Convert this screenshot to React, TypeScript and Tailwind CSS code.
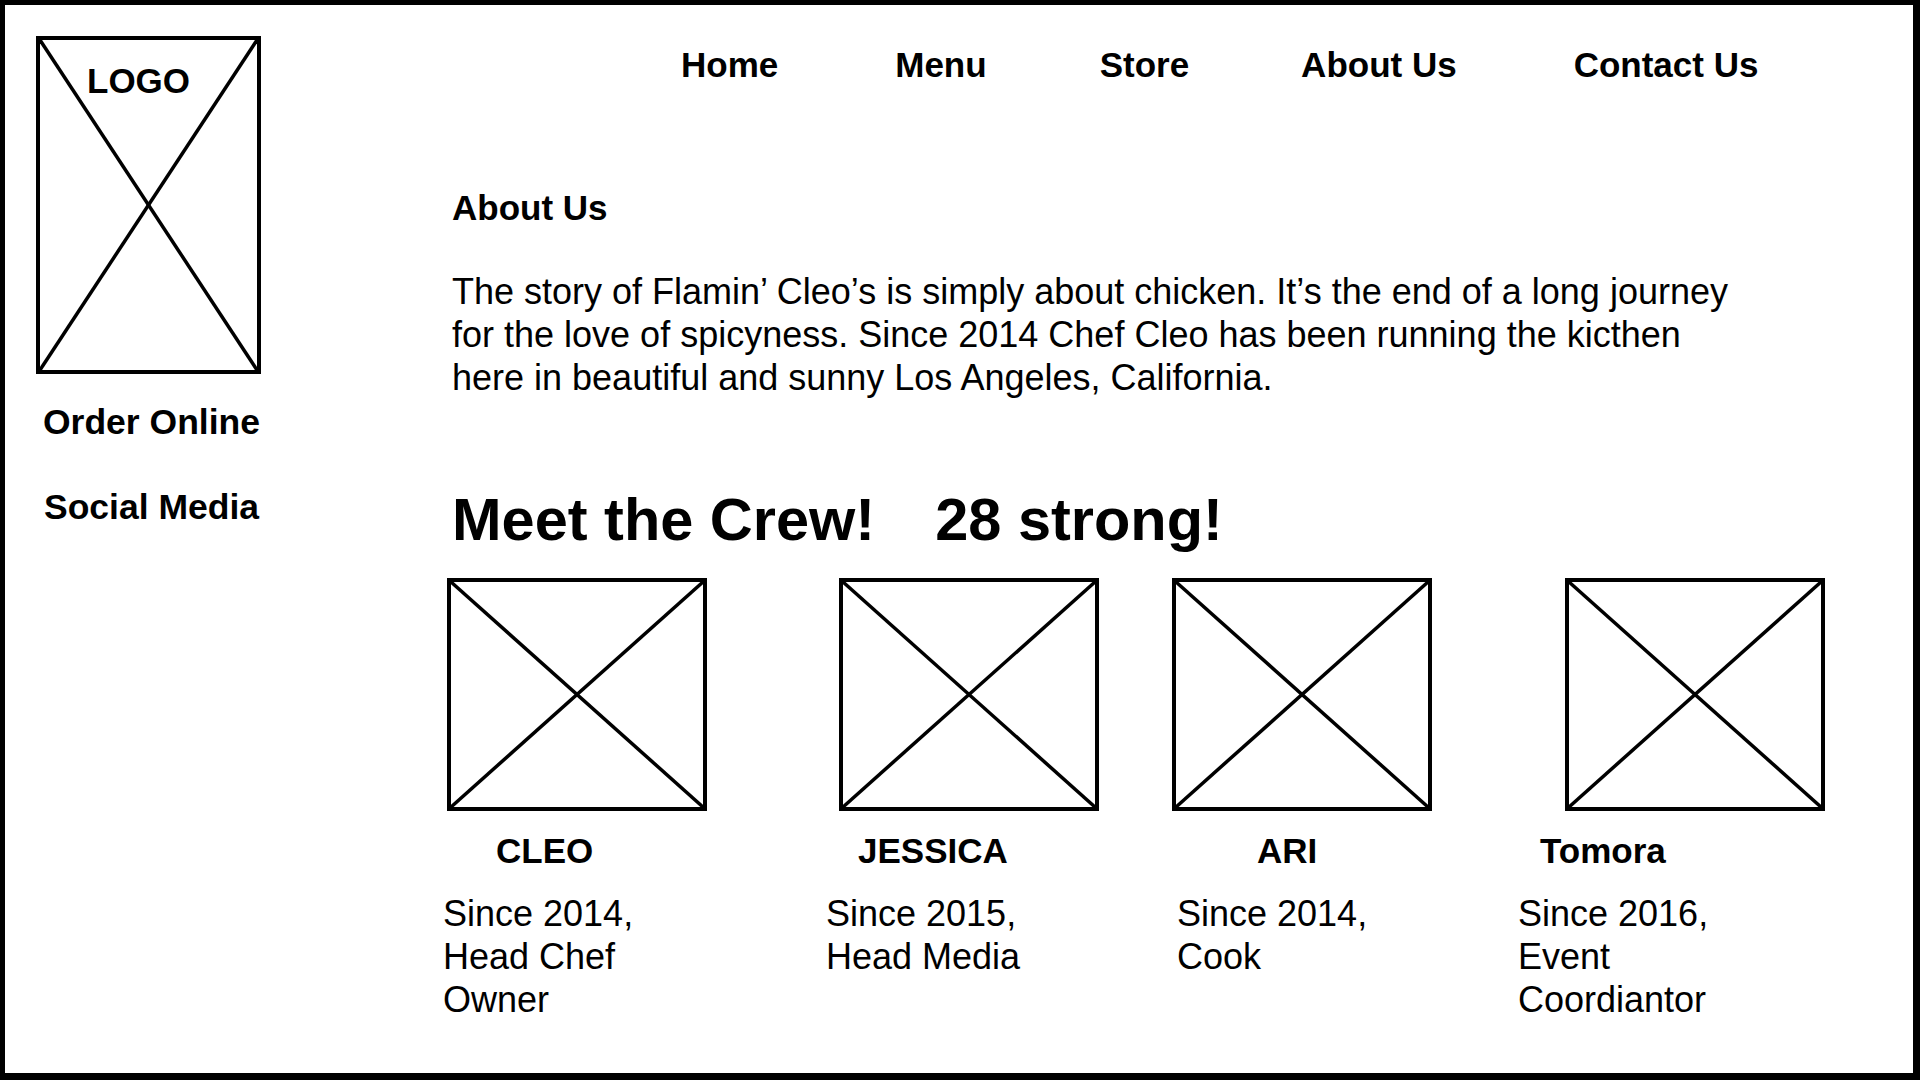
import React from "react";

// Placeholder frame with an X drawn corner to corner
function XBox({ className, children }: { className: string; children?: React.ReactNode }) {
  return (
    <div className={`relative border-4 border-black ${className}`}>
      <svg className="absolute inset-0 h-full w-full" preserveAspectRatio="none" viewBox="0 0 100 100">
        <line x1="0" y1="0" x2="100" y2="100" stroke="black" strokeWidth="3.5" vectorEffect="non-scaling-stroke" />
        <line x1="100" y1="0" x2="0" y2="100" stroke="black" strokeWidth="3.5" vectorEffect="non-scaling-stroke" />
      </svg>
      {children}
    </div>
  );
}

type Member = {
  name: string;
  lines: string[];
  cardMl: string;
  nameMl: string;
  descMl: string;
};

const crew: Member[] = [
  { name: "CLEO", lines: ["Since 2014,", "Head Chef", "Owner"], cardMl: "ml-0", nameMl: "ml-[49px]", descMl: "-ml-[4px]" },
  { name: "JESSICA", lines: ["Since 2015,", "Head Media"], cardMl: "ml-[132px]", nameMl: "ml-[19px]", descMl: "-ml-[13px]" },
  { name: "ARI", lines: ["Since 2014,", "Cook"], cardMl: "ml-[73px]", nameMl: "ml-[85px]", descMl: "ml-[5px]" },
  { name: "Tomora", lines: ["Since 2016,", "Event", "Coordiantor"], cardMl: "ml-[133px]", nameMl: "-ml-[25px]", descMl: "-ml-[47px]" },
];

export default function App() {
  return (
    <div className="w-[1920px] h-[1080px] overflow-hidden bg-white text-black border-black border-t-[5px] border-l-[5px] border-r-[7px] border-b-[7px] font-['Liberation_Sans',Arial,sans-serif]">
      <div className="flex pl-[31px] pt-[31px]">
        {/* Sidebar */}
        <aside className="w-[225px] shrink-0">
          <XBox className="h-[338px] w-[225px]">
            <span className="absolute left-[47px] top-[21px] text-[35px] leading-[40px] font-bold">LOGO</span>
          </XBox>
          <div className="mt-[28px] ml-[7px] text-[35.5px] leading-[40px] font-bold whitespace-nowrap">Order Online</div>
          <div className="mt-[45px] ml-[8px] text-[35.5px] leading-[40px] font-bold whitespace-nowrap">Social Media</div>
        </aside>

        {/* Main column */}
        <main className="ml-[186px] flex-1">
          <nav className="mt-[9px] ml-[234px] flex text-[35px] leading-[40px] font-bold whitespace-nowrap">
            <span>Home</span>
            <span className="ml-[117px]">Menu</span>
            <span className="ml-[113px]">Store</span>
            <span className="ml-[112px]">About Us</span>
            <span className="ml-[117px]">Contact Us</span>
          </nav>

          <section className="pl-[5px]">
            <h2 className="mt-[103px] text-[35px] leading-[40px] font-bold">About Us</h2>
            <p className="mt-[42px] text-[36px] leading-[43px] whitespace-nowrap">
              The story of Flamin’ Cleo’s is simply about chicken. It’s the end of a long journey
              <br />
              for the love of spicyness. Since 2014 Chef Cleo has been running the kicthen
              <br />
              here in beautiful and sunny Los Angeles, California.
            </p>
            <h1 className="mt-[87px] text-[59.5px] leading-[68px] font-bold whitespace-nowrap">
              <span>Meet the Crew!</span>
              <span className="ml-[60px]">28 strong!</span>
            </h1>
          </section>

          <div className="mt-[24px] flex">
            {crew.map((m) => (
              <div key={m.name} className={`w-[260px] shrink-0 ${m.cardMl}`}>
                <XBox className="h-[233px] w-[260px]" />
                <div className={`mt-[20px] text-[35px] leading-[40px] font-bold whitespace-nowrap ${m.nameMl}`}>{m.name}</div>
                <div className={`mt-[21px] text-[36px] leading-[43px] whitespace-nowrap ${m.descMl}`}>
                  {m.lines.map((l) => (
                    <div key={l}>{l}</div>
                  ))}
                </div>
              </div>
            ))}
          </div>
        </main>
      </div>
    </div>
  );
}
